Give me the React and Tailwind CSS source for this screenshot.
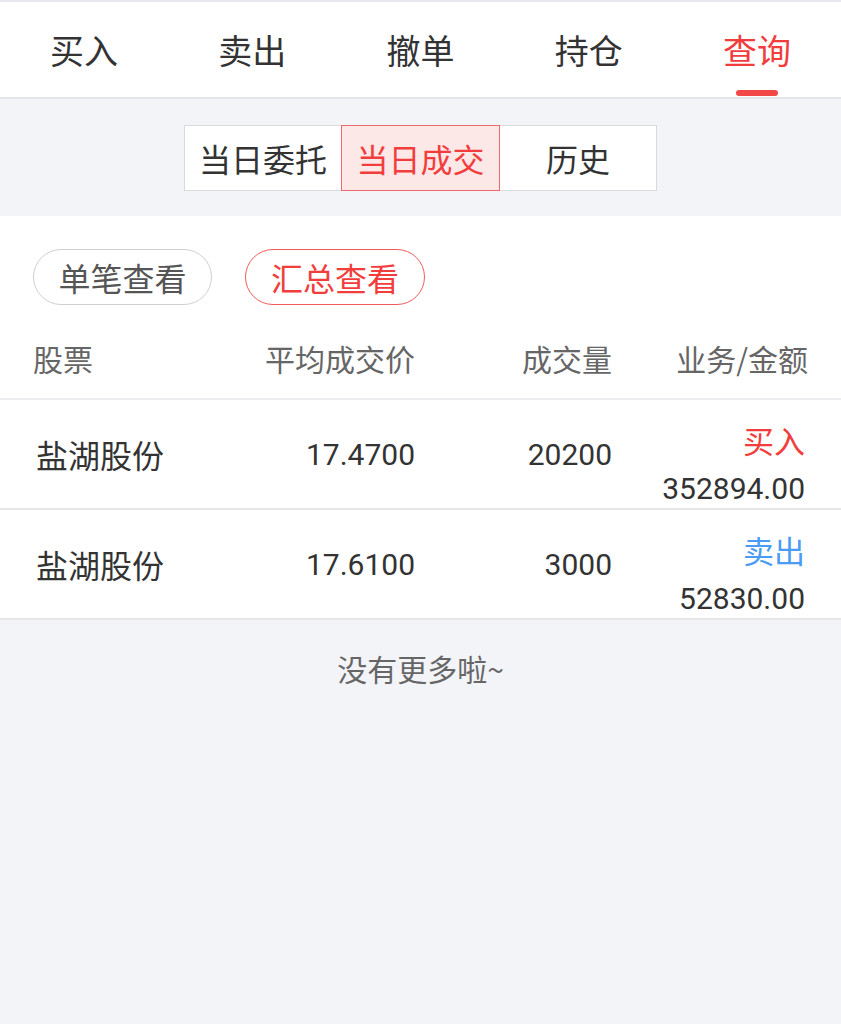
import React from "react";

const font = { fontFamily: '"Noto Sans CJK SC", "Noto Sans", sans-serif' };
const num = { fontFamily: 'Roboto, "Noto Sans CJK SC", sans-serif' };

export default function App() {
  const tabs = ["买入", "卖出", "撤单", "持仓", "查询"];
  const rows = [
    { name: "盐湖股份", price: "17.4700", vol: "20200", type: "买入", amt: "352894.00", color: "text-[#f23d3d]" },
    { name: "盐湖股份", price: "17.6100", vol: "3000", type: "卖出", amt: "52830.00", color: "text-[#4a9bf4]" },
  ];
  return (
    <div className="w-[841px] min-h-[1024px] bg-[#f3f4f8] text-[#333]" style={font}>
      {/* tab bar */}
      <div className="h-[99px] bg-white border-t-2 border-[#e8e8ee] border-b-2 border-b-[#e4e5ea] flex">
        {tabs.map((t, i) => (
          <div key={t} className="flex-1 relative flex items-center justify-center">
            <span className={`text-[34px] leading-none ${i === 4 ? "text-[#f23d3d]" : "text-[#333]"}`}>{t}</span>
            {i === 4 && (
              <div className="absolute bottom-[1px] left-1/2 -translate-x-1/2 w-[42px] h-[6px] rounded-full bg-[#f24848]" />
            )}
          </div>
        ))}
      </div>

      {/* segmented */}
      <div className="h-[117px] flex items-center justify-center">
        <div className="flex h-[66px] bg-white border border-[#d9d9de]">
          <div className="w-[156px] flex items-center justify-center text-[32px] text-[#333]">当日委托</div>
          <div className="w-[159px] -my-px flex items-center justify-center text-[32px] text-[#f23d3d] bg-[#fde8e8] border border-[#ee6a6a]">当日成交</div>
          <div className="w-[156px] flex items-center justify-center text-[32px] text-[#333]">历史</div>
        </div>
      </div>

      {/* list */}
      <div className="bg-white">
        <div className="flex gap-[33px] px-[33px] pt-[33px] pb-[13px]">
          <div className="w-[179px] h-[56px] rounded-full border border-[#cfcfd3] flex items-center justify-center text-[32px] text-[#555]">单笔查看</div>
          <div className="w-[180px] h-[56px] rounded-full border border-[#f05a5a] flex items-center justify-center text-[32px] text-[#f23d3d]">汇总查看</div>
        </div>
        <div className="h-[82px] flex items-center px-[33px] text-[30px] text-[#666] border-b-2 border-[#ececf0]">
          <div className="w-[150px]">股票</div>
          <div className="w-[232px] text-right">平均成交价</div>
          <div className="w-[197px] text-right">成交量</div>
          <div className="flex-1 text-right">业务/金额</div>
        </div>
        {rows.map((r, i) => (
          <div key={i} className="h-[110px] flex items-center pl-[36px] pr-[36px] border-b-2 border-[#e6e6ea]">
            <div className="w-[148px] text-[32px] text-[#333]">{r.name}</div>
            <div className="w-[231px] text-right text-[30px] text-[#333]" style={num}>{r.price}</div>
            <div className="w-[197px] text-right text-[30px] text-[#333]" style={num}>{r.vol}</div>
            <div className="flex-1 flex flex-col items-end leading-none pt-[20px]">
              <div className={`text-[31px] ${r.color} mb-[19px]`}>{r.type}</div>
              <div className="text-[30px] text-[#333]" style={num}>{r.amt}</div>
            </div>
          </div>
        ))}
      </div>

      <div className="h-[96px] flex items-center justify-center text-[30px] text-[#666]">没有更多啦~</div>
    </div>
  );
}
